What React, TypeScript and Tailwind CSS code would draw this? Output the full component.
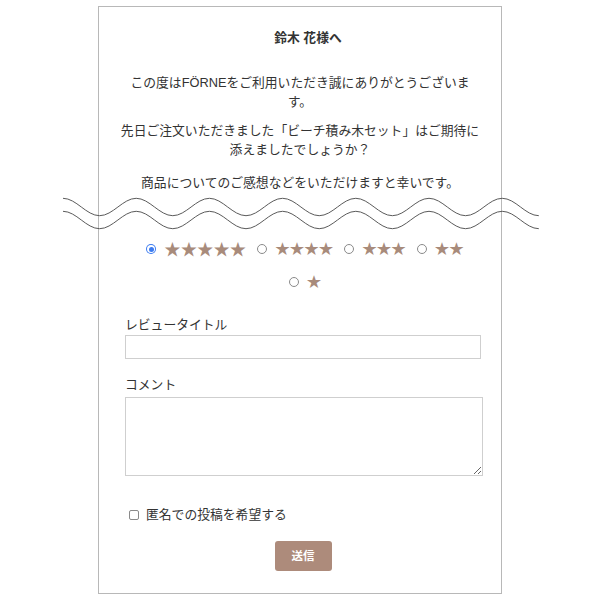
import React from 'react';

const HALF = 36.6;
const AMP = 8.7;

function wave(yc: number) {
  const k = HALF * 0.3634;
  let x = 1;
  let y = yc - AMP;
  let d = `M ${x} ${y}`;
  for (let i = 0; i < 13; i++) {
    const ny = i % 2 === 0 ? yc + AMP : yc - AMP;
    d += ` C ${(x + k).toFixed(2)} ${y} ${(x + HALF - k).toFixed(2)} ${ny} ${(x + HALF).toFixed(2)} ${ny}`;
    x += HALF;
    y = ny;
  }
  return d;
}

function Radio({ checked }: { checked?: boolean }) {
  if (checked) {
    return (
      <span className="flex h-[10px] w-[10px] items-center justify-center rounded-full bg-[#3b7bf0]">
        <span className="flex h-[8px] w-[8px] items-center justify-center rounded-full bg-white">
          <span className="h-[5px] w-[5px] rounded-full bg-[#3b7bf0]" />
        </span>
      </span>
    );
  }
  return <span className="h-[10px] w-[10px] rounded-full border border-[#8a8a8a] bg-white" />;
}

const ratings = [5, 4, 3, 2, 1];

export default function App() {
  return (
    <div className="min-h-[601px] bg-white pt-[6px] font-['Liberation_Sans','Noto_Sans_CJK_JP',sans-serif] text-[12.8px] leading-[19px] text-[#333]">
      <div className="relative ml-[98px] w-[404px] border border-[#b8b8b8] pb-[22px] pt-[21px]">
        <svg
          className="pointer-events-none absolute left-[-37px] top-[189px]"
          width="480"
          height="36"
          viewBox="0 0 480 36"
          fill="none"
        >
          <path d={wave(11)} stroke="#5a5a5a" strokeWidth="1" />
          <path d={wave(24)} stroke="#5a5a5a" strokeWidth="1" />
        </svg>

        <div className="px-[21px] text-center">
          <h1 className="pl-[16px] font-bold">鈴木 花様へ</h1>
          <p className="mt-[26px]">この度はFÖRNEをご利用いただき誠にありがとうございます。</p>
          <p className="mt-[10px]">先日ご注文いただきました「ビーチ積み木セット」はご期待に添えましたでしょうか？</p>
          <p className="mt-[14px]">商品についてのご感想などをいただけますと幸いです。</p>
        </div>

        <div className="mt-[45px] flex flex-wrap justify-center gap-x-[11px] gap-y-[9px] pl-[31px] pr-[21px]">
          {ratings.map((n) => (
            <label key={n} className="flex h-[24px] items-center gap-[8px]">
              <Radio checked={n === 5} />
              <span
                className={
                  n === 5
                    ? 'text-[16.4px] leading-[24px] text-[#a88b7b]'
                    : 'text-[14.5px] leading-[24px] text-[#a88b7b]'
                }
              >
                {'★'.repeat(n)}
              </span>
            </label>
          ))}
        </div>

        <form className="mt-[21px] pl-[26px]">
          <label className="block">レビュータイトル</label>
          <input
            type="text"
            className="mt-[1px] block h-[24px] w-[356px] border border-[#cfcfcf] bg-white outline-none"
          />
          <label className="mt-[16px] block">コメント</label>
          <textarea className="mt-[3px] block h-[79px] w-[358px] border border-[#cfcfcf] bg-white outline-none" />
          <div className="mt-[29px] flex items-center">
            <span className="ml-[4px] h-[10px] w-[10px] rounded-[2px] border border-[#8a8a8a] bg-white" />
            <span className="ml-[7px]">匿名での投稿を希望する</span>
          </div>
          <div className="mt-[17px] flex w-[356px] justify-center">
            <button
              type="button"
              className="h-[30px] w-[57px] rounded-[3px] bg-[#ad8b7b] text-[11.5px] font-bold text-white"
            >
              送信
            </button>
          </div>
        </form>
      </div>
    </div>
  );
}
